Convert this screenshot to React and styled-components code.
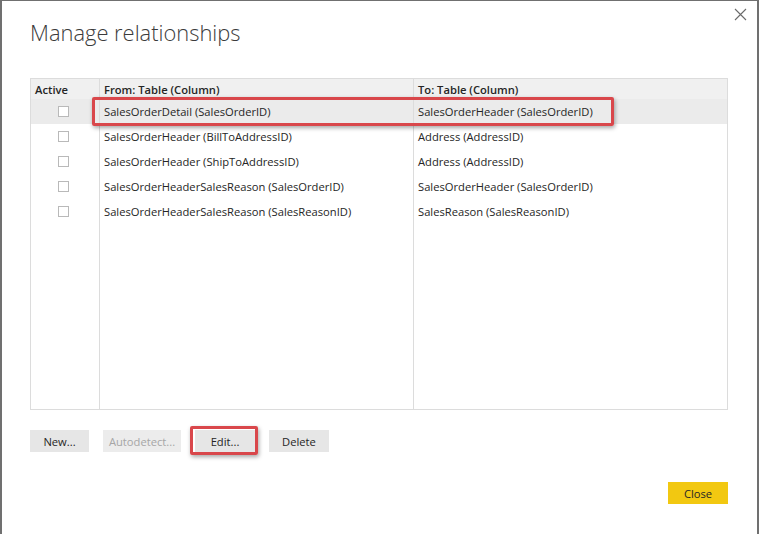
import React from 'react'
import styled, { createGlobalStyle } from 'styled-components'

const GlobalStyle = createGlobalStyle`
  html, body {
    margin: 0;
    padding: 0;
    background: #ffffff;
  }
  body {
    font-family: 'Open Sans', 'Liberation Sans', sans-serif;
  }
`

const colors = {
  frame: '#707070',
  text: '#252525',
  muted: '#a6a6a6',
  grid: '#dcdcdc',
  header: '#f0f0f0',
  selected: '#ebebeb',
  button: '#e6e6e6',
  red: '#d9474b',
  yellow: '#f2c811'
}

const Window = styled.div`
  position: relative;
  box-sizing: border-box;
  width: 759px;
  height: 534px;
  border-top: 1px solid ${colors.frame};
  border-left: 2px solid ${colors.frame};
  border-right: 2px solid ${colors.frame};
  padding: 0 29px 0 28px;
  display: flex;
  flex-direction: column;
  background: #fff;
  overflow: hidden;
`

const CloseX = styled.button`
  position: absolute;
  top: 5px;
  right: 9px;
  width: 16px;
  height: 16px;
  padding: 0;
  border: 0;
  background: none;
  display: flex;
  align-items: center;
  justify-content: center;
`

const Title = styled.h1`
  margin: 17px 0 0 0;
  height: 60px;
  font-family: 'Open Sans', 'Liberation Sans', sans-serif;
  font-weight: 300;
  font-size: 21.9px;
  color: #3b3b3b;
`

const Table = styled.div`
  position: relative;
  box-sizing: border-box;
  width: 698px;
  height: 332px;
  border: 1px solid ${colors.grid};
  display: grid;
  grid-template-columns: 68px 314px 1fr;
  grid-template-rows: 20px repeat(5, 25px) 1fr;
  font-size: 11.2px;
  color: ${colors.text};
`

const Cell = styled.div`
  display: flex;
  align-items: center;
  justify-content: ${p => (p.$center ? 'center' : 'flex-start')};
  padding-left: ${p => (p.$center ? 0 : 4)}px;
  white-space: nowrap;
  border-left: ${p => (p.$first ? 0 : `1px solid ${colors.grid}`)};
  background: ${p => (p.$head ? colors.header : p.$selected ? colors.selected : 'transparent')};
  font-weight: ${p => (p.$head ? 600 : 400)};
`

const HeadCell = styled(Cell)`
  padding-left: 4px;
  justify-content: flex-start;
`

const Check = styled.span`
  box-sizing: border-box;
  width: 11px;
  height: 11px;
  border: 1px solid #b9b9b9;
  background: #fff;
  margin-right: 3px;
`

const Highlight = styled.div`
  position: absolute;
  box-sizing: border-box;
  border: 3px solid ${colors.red};
  border-radius: 2px;
  box-shadow: 1px 2px 4px rgba(0, 0, 0, 0.35);
  pointer-events: none;
`

const RowHighlight = styled(Highlight)`
  left: 61px;
  top: 18px;
  width: 522px;
  height: 29px;
`

const ButtonRow = styled.div`
  display: flex;
  align-items: center;
  margin-top: 20px;
  gap: 14px;
`

const Button = styled.button`
  position: relative;
  box-sizing: border-box;
  height: 22px;
  width: ${p => p.$width}px;
  padding: 0;
  border: 0;
  background: ${p => (p.$primary ? colors.yellow : p.$disabled ? '#ececec' : colors.button)};
  color: ${p => (p.$disabled ? colors.muted : colors.text)};
  font-family: 'Open Sans', 'Liberation Sans', sans-serif;
  font-size: 11.2px;
`

const ButtonHighlight = styled(Highlight)`
  left: -5px;
  top: -4px;
  right: -3px;
  bottom: -3px;
`

const Footer = styled.div`
  display: flex;
  justify-content: flex-end;
  margin-top: 30px;
`

const rows = [
  ['SalesOrderDetail (SalesOrderID)', 'SalesOrderHeader (SalesOrderID)'],
  ['SalesOrderHeader (BillToAddressID)', 'Address (AddressID)'],
  ['SalesOrderHeader (ShipToAddressID)', 'Address (AddressID)'],
  ['SalesOrderHeaderSalesReason (SalesOrderID)', 'SalesOrderHeader (SalesOrderID)'],
  ['SalesOrderHeaderSalesReason (SalesReasonID)', 'SalesReason (SalesReasonID)']
]

export default function App() {
  return (
    <>
      <GlobalStyle />
      <Window>
        <CloseX aria-label='Close'>
          <svg width='13' height='13' viewBox='0 0 13 13'>
            <path d='M1 1 L12 12 M12 1 L1 12' stroke='#6a6a6a' strokeWidth='1.1' fill='none' />
          </svg>
        </CloseX>
        <Title>Manage relationships</Title>
        <Table>
          <HeadCell $head $first>Active</HeadCell>
          <HeadCell $head>From: Table (Column)</HeadCell>
          <HeadCell $head>To: Table (Column)</HeadCell>
          {rows.map(([from, to], i) => (
            <React.Fragment key={i}>
              <Cell $first $center $selected={i === 0}>
                <Check />
              </Cell>
              <Cell $selected={i === 0}>{from}</Cell>
              <Cell $selected={i === 0}>{to}</Cell>
            </React.Fragment>
          ))}
          <Cell $first />
          <Cell />
          <Cell />
          <RowHighlight />
        </Table>
        <ButtonRow>
          <Button $width={59}>New...</Button>
          <Button $width={78} $disabled>Autodetect...</Button>
          <Button $width={60}>
            Edit...
            <ButtonHighlight />
          </Button>
          <Button $width={60}>Delete</Button>
        </ButtonRow>
        <Footer>
          <Button $width={60} $primary>Close</Button>
        </Footer>
      </Window>
    </>
  )
}
